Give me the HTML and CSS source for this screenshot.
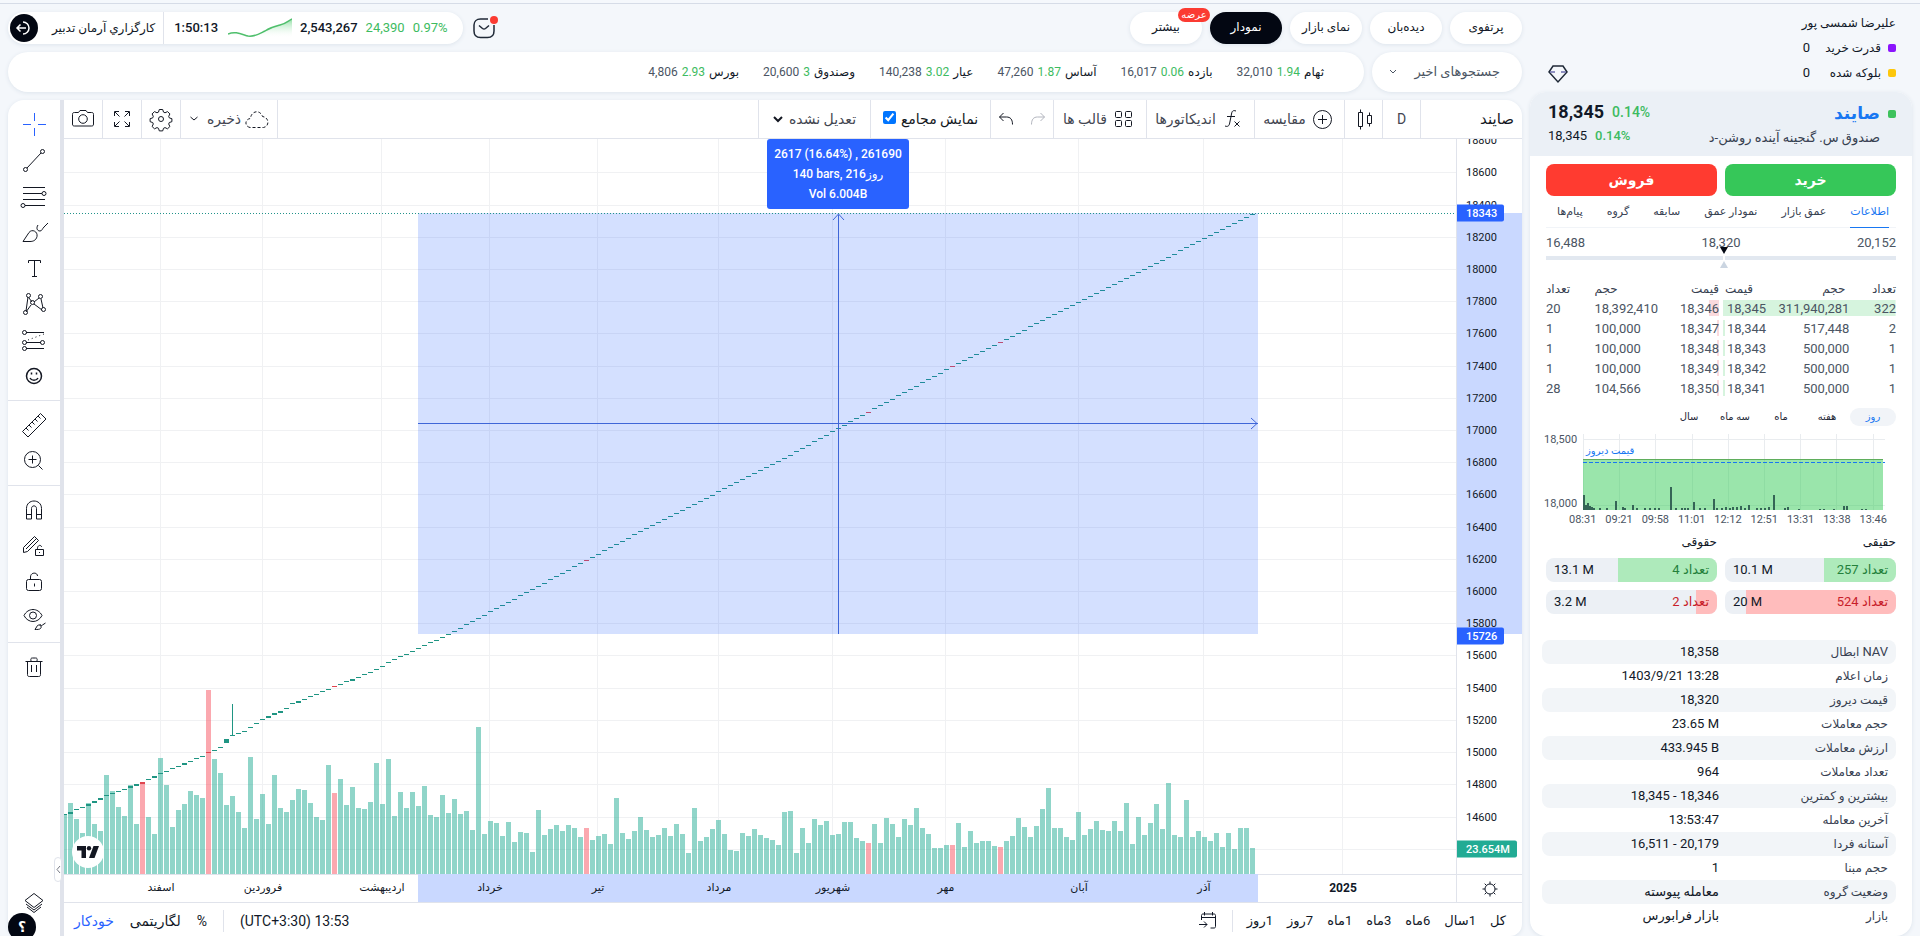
FILE: index.html
```html
<!DOCTYPE html>
<html lang="fa" dir="rtl">
<head>
<meta charset="utf-8">
<title>صایند - نمودار</title>
<link rel="stylesheet" href="styles.css">
</head>
<body>
<div class="page">
  <aside class="side">
    <section class="user">
      <div class="user-info">
        <strong class="user-name">علیرضا شمسی پور</strong>
        <div class="user-row"><i class="sq purple"></i><span class="user-label">قدرت خرید</span><span class="num">0</span></div>
        <div class="user-row"><i class="sq yellow"></i><span class="user-label">بلوکه شده</span><span class="num">0</span></div>
      </div>
      <button class="icon-btn gem" aria-label="باشگاه"><svg width="20" height="20" viewBox="0 0 20 20"><path d="M5 2h10l4 6-9 10L1 8z"/><path class="faint" d="M2 8h5M13 8h5"/></svg></button>
    </section>

    <section class="symbol-card">
      <header class="symbol-head">
        <div class="symbol-id">
          <i class="sq green"></i>
          <div>
            <h1 class="symbol-name">صایند</h1>
            <p class="symbol-desc">صندوق س. گنجینه آینده روشن-د</p>
          </div>
        </div>
        <div class="quote" dir="ltr">
          <div class="quote-row main-price"><b>18,345</b><span class="up">0.14%</span></div>
          <div class="quote-row"><span>18,345</span><span class="up">0.14%</span></div>
        </div>
      </header>

      <div class="symbol-body">
        <div class="trade">
          <button class="buy">خرید</button>
          <button class="sell">فروش</button>
        </div>
        <nav class="tabs">
          <a href="#info" class="on">اطلاعات</a><a href="#depth">عمق بازار</a><a href="#depthchart">نمودار عمق</a><a href="#history">سابقه</a><a href="#group">گروه</a><a href="#messages">پیام‌ها</a>
        </nav>

        <div class="range">
          <div class="range-labels num"><span>20,152</span><span>18,320</span><span>16,488</span></div>
          <div class="range-bar"><i class="mark-top"></i><i class="mark-gap"></i><i class="mark-bottom"></i></div>
        </div>

        <div class="depth">
          <table class="book bid">
            <thead><tr><th>تعداد</th><th>حجم</th><th>قیمت</th></tr></thead>
            <tbody>
              <tr class="full"><td>322</td><td>311,940,281</td><td>18,345</td></tr>
              <tr><td>2</td><td>517,448</td><td>18,344</td></tr>
              <tr><td>1</td><td>500,000</td><td>18,343</td></tr>
              <tr><td>1</td><td>500,000</td><td>18,342</td></tr>
              <tr><td>1</td><td>500,000</td><td>18,341</td></tr>
            </tbody>
          </table>
          <table class="book ask">
            <thead><tr><th>قیمت</th><th>حجم</th><th>تعداد</th></tr></thead>
            <tbody>
              <tr class="part"><td>18,346</td><td>18,392,410</td><td>20</td></tr>
              <tr><td>18,347</td><td>100,000</td><td>1</td></tr>
              <tr><td>18,348</td><td>100,000</td><td>1</td></tr>
              <tr><td>18,349</td><td>100,000</td><td>1</td></tr>
              <tr><td>18,350</td><td>104,566</td><td>28</td></tr>
            </tbody>
          </table>
        </div>

        <div class="periods">
          <button class="on">روز</button><button>هفته</button><button>ماه</button><button>سه ماه</button><button>سال</button>
        </div>

        <div class="mini" dir="ltr">
          <div class="mini-y"><span>18,500</span><span>18,000</span></div>
          <div class="mini-plot">
            <svg id="mini" width="100%" height="76" viewBox="0 0 302 76" preserveAspectRatio="none"></svg>
            <span class="mini-label" dir="rtl">قیمت دیروز</span>
          </div>
          <div class="mini-x"><span>08:31</span><span>09:21</span><span>09:58</span><span>11:01</span><span>12:12</span><span>12:51</span><span>13:31</span><span>13:38</span><span>13:46</span></div>
        </div>

        <div class="share">
          <div class="share-col">
            <h2>حقیقی</h2>
            <div class="meter pos"><i style="width:42%"></i><span>تعداد 257</span><b dir="ltr">10.1 M</b></div>
            <div class="meter neg"><i style="width:88%"></i><span>تعداد 524</span><b dir="ltr">20 M</b></div>
          </div>
          <div class="share-col">
            <h2>حقوقی</h2>
            <div class="meter pos"><i style="width:58%"></i><span>تعداد 4</span><b dir="ltr">13.1 M</b></div>
            <div class="meter neg"><i style="width:12%"></i><span>تعداد 2</span><b dir="ltr">3.2 M</b></div>
          </div>
        </div>

        <dl class="facts">
          <div><dt><span class="num">NAV</span> ابطال</dt><dd dir="ltr">18,358</dd></div>
          <div><dt>زمان اعلام</dt><dd dir="ltr">1403/9/21 13:28</dd></div>
          <div><dt>قیمت دیروز</dt><dd dir="ltr">18,320</dd></div>
          <div><dt>حجم معاملات</dt><dd dir="ltr">23.65 M</dd></div>
          <div><dt>ارزش معاملات</dt><dd dir="ltr">433.945 B</dd></div>
          <div><dt>تعداد معاملات</dt><dd dir="ltr">964</dd></div>
          <div><dt>بیشترین و کمترین</dt><dd dir="ltr">18,345 - 18,346</dd></div>
          <div><dt>آخرین معامله</dt><dd dir="ltr">13:53:47</dd></div>
          <div><dt>آستانه فردا</dt><dd dir="ltr">16,511 - 20,179</dd></div>
          <div><dt>حجم مبنا</dt><dd dir="ltr">1</dd></div>
          <div><dt>وضعیت گروه</dt><dd>معامله پیوسته</dd></div>
          <div><dt>بازار</dt><dd>بازار فرابورس</dd></div>
        </dl>
      </div>
    </section>
  </aside>

  <main class="main">
    <header class="top">
      <nav class="nav">
        <a href="#portfolio">پرتفوی</a><a href="#watch">دیده‌بان</a><a href="#market">نمای بازار</a><a href="#chart" class="on">نمودار</a><a href="#more">بیشتر<span class="badge">عرضه</span></a>
      </nav>
      <div class="status" dir="ltr">
        <div class="status-pill">
          <button class="exit" aria-label="خروج"><svg width="28" height="28" viewBox="0 0 28 28"><path d="M13 8a6 6 0 1 1 0 12M16 14H7M10.500 10.500L7 14l3.500 3.500"/></svg></button>
          <span class="broker" dir="rtl">کارگزاري آرمان تدبیر</span>
          <i class="vline"></i>
          <b class="clock">1:50:13</b>
          <svg class="spark" width="64" height="20" viewBox="0 0 64 20"><defs><linearGradient id="sg" x1="0" y1="0" x2="0" y2="1"><stop offset="0" stop-color="#8fdea3"/><stop offset="1" stop-color="#fff" stop-opacity="0"/></linearGradient></defs><path fill="url(#sg)" stroke="none" d="M0 16c7-3 13 0 20 2 7 1 11-2 17-5 6-4 11-5 15-6 6-1 8-4 12-6v19H0z"/><path fill="none" stroke="#4fbf6c" stroke-width="1.500" d="M0 16c7-3 13 0 20 2 7 1 11-2 17-5 6-4 11-5 15-6 6-1 8-4 12-6"/></svg>
          <b>2,543,267</b><span class="up">24,390</span><span class="up">0.97%</span>
        </div>
        <button class="icon-btn mail" aria-label="پیام‌ها"><svg width="22" height="22" viewBox="0 0 22 22"><path d="M15 2H7.500C3.500 2 1 4.500 1 8v6c0 4 2.500 6.500 6.500 6.500h7c4 0 6.500-2.500 6.500-6.500V8M6 8.500l3.500 3c1 .8 2 .8 3 0l3.500-3"/></svg><i class="dot"></i></button>
      </div>
    </header>

    <div class="quotes">
      <button class="recent">جستجوهای اخیر<svg width="8" height="6" viewBox="0 0 8 6"><path d="M1 1l3 3 3-3"/></svg></button>
      <ul class="ticker">
        <li><b>ثهام</b><span class="up">1.94</span><span>32,010</span></li>
        <li><b>بازده</b><span class="up">0.06</span><span>16,017</span></li>
        <li><b>آساس</b><span class="up">1.87</span><span>47,260</span></li>
        <li><b>عیار</b><span class="up">3.02</span><span>140,238</span></li>
        <li><b>وصندوق</b><span class="up">3</span><span>20,600</span></li>
        <li><b>بورس</b><span class="up">2.93</span><span>4,806</span></li>
      </ul>
    </div>

    <section class="chart">
      <div class="chart-main">
        <div class="bar">
          <button class="bar-symbol">صایند</button>
          <button class="w-d">D</button>
          <button class="w-c" aria-label="نوع نمودار"><svg width="28" height="28" viewBox="0 0 28 28"><path d="M8.500 7.500h4v14h-4zM10.500 4.500v3M10.500 21.500v3M17.500 10.500h4v8h-4zM19.500 7.500v3M19.500 18.500v3"/></svg></button>
          <button class="w-cmp"><svg width="28" height="28" viewBox="0 0 28 28"><circle cx="14.500" cy="14.500" r="9"/><path d="M10 14.500h9M14.500 10v9"/></svg>مقایسه</button>
          <button class="w-ind"><svg width="28" height="28" viewBox="0 0 28 28"><path d="M18 6c-3-1-4 0-4.500 3l-1.800 9c-.5 3-2 4-4.700 3M9 11.500h8M16.500 16.500l5 5M21.500 16.500l-5 5"/></svg>اندیکاتورها</button>
          <button class="w-tpl"><svg width="28" height="28" viewBox="0 0 28 28"><rect x="6.500" y="6.500" width="6" height="6" rx="1"/><rect x="16.500" y="6.500" width="6" height="6" rx="1"/><rect x="6.500" y="15.500" width="6" height="6" rx="1"/><rect x="16.500" y="15.500" width="6" height="6" rx="1"/></svg>قالب ها</button>
          <div class="group w-hist">
            <button class="plain off" aria-label="از نو"><svg width="28" height="28" viewBox="0 0 28 28"><path d="M7.500 19.500c0-5 2-7.500 6-7.500h7M16.500 8l4 4-4 4"/></svg></button>
            <button class="plain" aria-label="واگرد"><svg width="28" height="28" viewBox="0 0 28 28"><path d="M20.500 19.500c0-5-2-7.500-6-7.500h-7M11.500 8l-4 4 4 4"/></svg></button>
          </div>
          <label class="group w-chk">نمایش مجامع<input type="checkbox" checked></label>
          <button class="w-adj">تعدیل نشده<svg width="10" height="8" viewBox="0 0 10 8"><path class="thick" d="M1 2l4 4 4-4"/></svg></button>
          <div class="bar-end">
            <div class="group w-save">
              <button class="plain save"><svg width="24" height="20" viewBox="0 0 24 20"><path stroke-dasharray="3 2" d="M5 18.500C-1 17 0 10 5.500 9.500 6 2 15 0 17.500 7.500c7 1 7 10 1 11z"/></svg>ذخیره</button>
              <button class="plain" aria-label="بیشتر"><svg width="10" height="8" viewBox="0 0 10 8"><path d="M1.500 2l3.500 3 3.500-3"/></svg></button>
            </div>
            <button class="w-i" aria-label="تنظیمات"><svg width="28" height="28" viewBox="0 0 28 28"><circle cx="14" cy="14" r="2.500"/><path d="M12.300 4.500h3.400l.8 2.600 1.500.7 2.500-1.200 2.400 2.300-1.200 2.500.6 1.500 2.600.8v3l-2.600.8-.6 1.500 1.200 2.500-2.400 2.300-2.500-1.200-1.500.7-.8 2.600h-3.400l-.8-2.600-1.500-.7-2.500 1.200-2.400-2.300 1.200-2.500-.6-1.500-2.600-.8v-3l2.600-.8.6-1.500-1.200-2.500 2.400-2.300L10 7.800l1.500-.7z"/></svg></button>
            <button class="w-i" aria-label="تمام صفحه"><svg width="28" height="28" viewBox="0 0 28 28"><path d="M6.500 11V6.500H11M7 7l4.500 4.500M17 6.500h4.500V11M21 7l-4.500 4.500M6.500 17v4.500H11M7 21l4.500-4.500M17 21.500h4.500V17M21 21l-4.500-4.500"/></svg></button>
            <button class="w-i" aria-label="عکس"><svg width="28" height="28" viewBox="0 0 28 28"><path d="M5.500 7.500h4l1.500-2h6l1.500 2h4c1.500 0 2 .5 2 2v9.500c0 1.500-.5 2-2 2h-17c-1.500 0-2-.5-2-2V9.500c0-1.500.5-2 2-2z"/><circle cx="14" cy="14" r="4.300"/></svg></button>
          </div>
        </div>

        <div class="canvas" dir="ltr">
          <div class="plot">
            <svg id="plot" viewBox="0 0 1392 735" preserveAspectRatio="none" width="100%" height="100%"></svg>
            <div class="measure"><p>2617 (16.64%) , 261690</p><p>140 bars, 216<bdi>روز</bdi></p><p>Vol 6.004B</p></div>
            <div class="logo"><svg width="22" height="12" viewBox="0 0 22 12"><path d="M0 0h9v12H4.500V4.500H0z"/><circle cx="12" cy="2.200" r="2.200"/><path d="M16.500 0H22l-4.500 12H12z"/></svg></div>
          </div>
          <div class="prices" id="prices"></div>
          <div class="times" id="times"></div>
          <button class="axis-cog" aria-label="تنظیمات محور"><svg width="18" height="18" viewBox="0 0 18 18"><circle cx="9" cy="9" r="5"/><path d="M9 1.500v2.500M9 14v2.500M1.500 9H4M14 9h2.500M3.700 3.700l1.800 1.800M12.500 12.500l1.800 1.800M3.700 14.300l1.800-1.800M12.500 5.500l1.800-1.800"/></svg></button>
        </div>

        <footer class="foot">
          <div class="spans"><button>کل</button><button>1سال</button><button>6ماه</button><button>3ماه</button><button>1ماه</button><button>7روز</button><button>1روز</button><i class="vline"></i><button aria-label="برو به تاریخ"><svg width="20" height="20" viewBox="0 0 20 20"><path d="M3.500 9V4.500c0-1 .5-1.500 1.500-1.500h11c1 0 1.500.5 1.500 1.500v11c0 1-.5 1.500-1.500 1.500h-3.500M3.500 6.500h14M6.500 1v3.500M14.500 1v3.500M1 13.500h8M6 10.500l3 3-3 3"/></svg></button></div>
          <div class="scales"><button dir="ltr">(UTC+3:30) 13:53</button><i class="vline"></i><button>%</button><button>لگاریتمی</button><button class="blue">خودکار</button></div>
        </footer>
      </div>

      <div class="tools">
        <div class="tool-set">
          <button class="blue" aria-label="نشانگر"><svg viewBox="0 0 28 28"><path d="M3 14.500h8M18 14.500h8M14.500 3v8M14.500 18v8"/></svg></button>
          <button aria-label="خط روند"><svg viewBox="0 0 28 28"><path d="M7 22L21 7"/><circle cx="5.500" cy="23.500" r="2"/><circle cx="22.500" cy="5.500" r="2"/></svg></button>
          <button aria-label="فیبوناچی"><svg viewBox="0 0 28 28"><path d="M3 5.500h22M3 11.500h19M3 17.500h22M5 23.500h20"/><circle cx="24" cy="11.500" r="2"/><circle cx="3" cy="23.500" r="2"/></svg></button>
          <button aria-label="قلم مو"><svg viewBox="0 0 28 28"><path d="M3 23.500l6-9c3-4 9-1 8 4-1 4-4 5-7 5zM18 7c-2 3-1 6 2 6 2 0 2-2 4-4l4-4"/></svg></button>
          <button aria-label="متن"><svg viewBox="0 0 28 28"><path d="M8.500 9V6.500h12V9M14.500 6.500v16M12 22.500h5"/></svg></button>
          <button aria-label="الگوها"><svg viewBox="0 0 28 28"><path d="M8 7L6 21M9 8l3 4M14 12l5-4M21 9l2 9M14 14l8 6M11 15l-5 7"/><circle cx="8.500" cy="5.500" r="2"/><circle cx="20.500" cy="6.500" r="2"/><circle cx="12.500" cy="12.500" r="2"/><circle cx="23.500" cy="19.500" r="2"/><circle cx="5.500" cy="22.500" r="2"/></svg></button>
          <button aria-label="پیش‌بینی"><svg viewBox="0 0 28 28"><path d="M6 6.500h18M6 16.500h15M6 22.500h18"/><path stroke-dasharray="1 3" d="M8 14l16-6"/><circle cx="4.500" cy="6.500" r="2"/><circle cx="4.500" cy="16.500" r="2"/><circle cx="22.500" cy="16.500" r="2"/><circle cx="4.500" cy="22.500" r="2"/></svg></button>
          <button aria-label="شکلک"><svg viewBox="0 0 28 28" stroke-width="1.500"><circle cx="14" cy="14" r="7.500"/><path d="M10 16c1.500 3 6.500 3 8 0M11.500 10.500v2M16.500 10.500v2"/></svg></button>
        </div>
        <div class="tool-set">
          <button aria-label="خط‌کش"><svg viewBox="0 0 28 28"><path d="M2.500 20.500l18-18 5.500 5.500-18 18zM6 17l2.500 2.500M9 14l2.500 2.500M12 11l2.500 2.500M15 8l2.500 2.500M18 5l2.500 2.500"/></svg></button>
          <button aria-label="بزرگنمایی"><svg viewBox="0 0 28 28"><circle cx="12.500" cy="12.500" r="8"/><path d="M18.500 18.500l4 4M8.500 12.500h8M12.500 8.500v8"/></svg></button>
        </div>
        <div class="tool-set">
          <button aria-label="آهنربا"><svg viewBox="0 0 28 28"><path d="M6.500 23V12.500c0-10 15-10 15 0V23h-5V12.500c0-3.500-5-3.500-5 0V23zM6.500 18.500h5M16.500 18.500h5"/></svg></button>
          <button aria-label="قفل رسم"><svg viewBox="0 0 28 28"><path d="M3.500 15.500L14.500 4.500l4 4-11 11-4 1zM6 17l10-10M15.500 17.500h8v6h-8zM17.500 17.500c-.5-5 4-5 4-2.500M19.500 20v1"/></svg></button>
          <button aria-label="قفل"><svg viewBox="0 0 28 28"><rect x="6.500" y="11.500" width="15" height="11" rx="2"/><path d="M10.500 11.500V9c0-5 7-5 7-1M14.500 15.500v3"/></svg></button>
          <button aria-label="نمایش"><svg viewBox="0 0 28 28"><path d="M4 11.500c4-8 14-8 18 0-4 8-14 8-18 0z"/><circle cx="13" cy="11.500" r="3.500"/><path d="M15 25.500l2.500-4c2-1.500 5 1 3 3-1 1-3 1-5.500 1zM20 20c0 2 2 2 2.500 1l3-2"/></svg></button>
        </div>
        <div class="tool-set last">
          <button aria-label="حذف"><svg viewBox="0 0 28 28"><path d="M5.500 8.500h17M7.500 8.500v13c0 1.500.5 2 2 2h9c1.500 0 2-.5 2-2v-13M11 8c-.5-2.500 0-3 1.500-3h3c1.500 0 2 .5 1.500 3M11.500 12v7M16.500 12v7"/></svg></button>
        </div>
        <button class="layers" aria-label="لایه‌ها"><svg viewBox="0 0 28 28"><path d="M14 4.500l9 7-9 7-9-7zM6 15l8 6 8-6M7 18l7 5.500 7-5.500"/></svg></button>
        <button class="help">؟</button>
        <button class="handle" aria-label="بستن"><svg width="5" height="9" viewBox="0 0 5 9"><path d="M4 1L1 4.500 4 8"/></svg></button>
      </div>
    </section>
  </main>
</div>
<script src="chart.js"></script>
</body>
</html>
```
FILE: styles.css
```css
* { box-sizing: border-box; }
body {
  margin: 0;
  border-top: 3px solid #f5f8fc;
  background: #f4f7fb;
  color: #111827;
  font: 12px/16px Roboto, "DejaVu Sans", sans-serif;
}
h1, h2, p, ul, dl, dd { margin: 0; padding: 0; }
ul { list-style: none; }
a { color: inherit; text-decoration: none; }
button { margin: 0; padding: 0; border: 0; background: none; color: inherit; font: inherit; cursor: pointer; }
svg { display: block; fill: none; stroke: currentColor; flex: none; }
.thick { stroke-width: 2; }
.num { font-size: 13px; }
.up { color: #3dbb61; }
.blue { color: #2962ff; }
.vline { width: 1px; align-self: stretch; background: #e0e3eb; }

.page {
  display: grid;
  grid-template-columns: 382px minmax(0, 1fr);
  gap: 8px;
  min-height: calc(100vh - 3px);
  padding: 8px 8px 0;
  border-top: 1px solid #d6dce7;
}
.main { display: flex; flex-direction: column; gap: 8px; }
.side { display: flex; flex-direction: column; }

/* Header */
.top, .nav, .status, .status-pill { display: flex; align-items: center; }
.top { justify-content: space-between; }
.nav { gap: 8px; }
.nav a {
  position: relative;
  width: 72px;
  height: 32px;
  border-radius: 16px;
  background: #fff;
  box-shadow: 0 1px 4px #dde4ec;
  line-height: 30px;
  text-align: center;
}
.nav a.on { background: #030712; color: #fff; }
.badge {
  position: absolute;
  top: -4px;
  right: -8px;
  width: 32px;
  border-radius: 7px;
  background: #fb3b32;
  color: #fff;
  font-size: 10px;
  line-height: 14px;
}
.status { gap: 10px; }
.status-pill {
  height: 32px;
  gap: 8px;
  padding: 0 15px 0 2px;
  border-radius: 16px;
  background: #fff;
  box-shadow: 0 1px 4px #dde4ec;
  font-size: 13px;
}
.status-pill b { font-weight: 500; }
.exit { border-radius: 14px; background: #030712; color: #fff; }
.exit svg { stroke-width: 1.5; }
.broker { margin-left: 6px; font-size: 12px; }
.clock { margin: 0 2px; }
.icon-btn { position: relative; color: #1f2937; }
.icon-btn svg { stroke-width: 1.5; }
.dot { position: absolute; top: -1px; right: -3px; width: 8px; height: 8px; border-radius: 4px; background: #fb3b32; }

.quotes { display: flex; gap: 8px; }
.recent, .ticker { height: 40px; border-radius: 20px; background: #fff; box-shadow: 0 1px 4px #dde4ec; }
.recent { display: flex; align-items: center; justify-content: space-between; width: 150px; padding: 0 22px 0 17px; color: #4b5563; font-size: 13px; }
.ticker { display: flex; flex: 1; align-items: center; gap: 24px; padding: 0 40px; }
.ticker li { display: flex; gap: 4px; color: #4b5563; }
.ticker b { color: #111827; font-weight: 400; }

/* Chart card */
.chart { display: flex; flex: 1; border-radius: 16px 16px 12px 12px; background: #fff; box-shadow: 0 1px 4px #dde4ec; }
.chart-main { display: flex; flex: 1; flex-direction: column; min-width: 0; border-left: 4px solid #e0e3eb; }
.bar { display: flex; height: 39px; border-bottom: 1px solid #e0e3eb; color: #434651; font-size: 14px; }
.bar > button, .bar .group, .bar-end > button { display: flex; align-items: center; justify-content: center; gap: 2px; border-left: 1px solid #e0e3eb; white-space: nowrap; }
.bar svg { color: #131722; }
.bar .bar-symbol { width: 102px; padding: 0 8px 0 0; justify-content: flex-start; color: #131722; font-size: 15px; font-weight: 500; }
.w-d { width: 38px; }
.w-c { width: 38px; }
.w-cmp { width: 90px; }
.w-ind { width: 108px; }
.w-tpl { width: 93px; }
.bar .w-hist { width: 63px; gap: 4px; }
.w-hist .off svg { color: #b2b5be; }
.bar .w-chk { width: 120px; gap: 5px; color: #131722; }
.w-chk input { width: 13px; height: 13px; margin: 0 0 4px; accent-color: #0075ff; }
.bar .w-adj { width: 112px; gap: 6px; }
.bar-end { display: flex; margin-right: auto; }
.bar .w-save { width: 98px; gap: 8px; border-right: 1px solid #e0e3eb; }
.save { display: flex; align-items: center; gap: 4px; }
.w-i { width: 39px; }
.bar-end .w-i:last-child { width: 38px; border-left: 0; }

.canvas {
  display: grid;
  flex: 1;
  grid-template: minmax(0, 1fr) 28px / minmax(0, 1fr) 66px;
  min-height: 400px;
}
.plot { position: relative; overflow: hidden; }
.plot > svg { position: absolute; inset: 0; stroke: none; }
.prices { position: relative; overflow: hidden; border-left: 1px solid #e0e3eb; font-size: 11px; line-height: 17px; }
.prices span { position: absolute; left: 0; padding: 0 7px 0 9px; transform: translateY(-50%); }
.prices .tag { border-radius: 0 2px 2px 0; background: #2962ff; color: #fff; font-weight: 500; }
.prices .tag.vol { background: #22ab94; }
.band { position: absolute; background: #c9d8ff; }
.prices .band { left: 0; right: 0; }
.times { position: relative; border-top: 1px solid #e0e3eb; font-size: 11px; line-height: 26px; }
.times span { position: absolute; transform: translateX(-50%); white-space: nowrap; }
.times .year { font-size: 12px; font-weight: 700; }
.times .band { top: -1px; bottom: 0; }
.axis-cog { display: grid; place-items: center; border-top: 1px solid #e0e3eb; border-left: 1px solid #e0e3eb; }
.measure {
  position: absolute;
  top: 0;
  left: 50%;
  margin-left: 7px;
  width: 142px;
  padding: 5px 0;
  border-radius: 3px;
  background: #2962ff;
  color: #fff;
  font-weight: 500;
  line-height: 20px;
  text-align: center;
}
.logo { position: absolute; left: 8px; bottom: 6px; display: grid; place-items: center; width: 32px; height: 32px; border-radius: 16px; background: #fff; }
.logo svg { fill: #131722; stroke: none; }

.foot { display: flex; justify-content: space-between; height: 34px; padding: 2px 16px 0 10px; border-top: 1px solid #e0e3eb; }
.spans, .scales { display: flex; align-items: center; gap: 16px; }
.spans { gap: 14px; font-size: 13px; }
.scales { font-size: 14px; }
.foot .vline { height: 22px; align-self: center; }

/* Drawing tools */
.tools { position: relative; display: flex; flex-direction: column; width: 52px; padding-top: 6px; color: #131722; }
.tool-set { display: flex; flex-direction: column; padding-bottom: 6px; margin-bottom: 6px; border-bottom: 1px solid #e0e3eb; }
.tool-set.last { border: 0; }
.tools button { display: grid; place-items: center; height: 36px; }
.tools svg { width: 28px; height: 28px; }
.tools .layers { margin-top: auto; margin-bottom: 15px; }
.tools .help { position: absolute; left: 0; bottom: -5px; width: 28px; height: 28px; border-radius: 14px; background: #030712; color: #fff; font-size: 14px; font-weight: 700; }
.tools .handle { position: absolute; right: -2px; bottom: 54px; width: 8px; height: 25px; border: 1px solid #e0e3eb; border-radius: 4px; background: #fff; color: #787b86; }
.tools .handle svg { width: 5px; height: 9px; }

/* User */
.user { display: flex; align-items: flex-end; justify-content: space-between; height: 80px; padding: 0 16px 8px; }
.user-info { align-self: flex-start; padding-top: 3px; }
.user-name { display: block; margin-bottom: 4px; font-size: 12px; font-weight: 500; }
.user-row { display: flex; align-items: center; gap: 7px; height: 25px; }
.user-label { width: 64px; }
.sq { width: 8px; height: 8px; border-radius: 2px; flex: none; }
.purple { background: #8b14fd; }
.yellow { background: #fdc70c; }
.green { background: #3dc25c; }
.gem { margin-left: 2px; }
.gem .faint { stroke: #6d6fae; }

/* Symbol card */
.symbol-card { flex: 1; border-radius: 16px; background: #fff; box-shadow: 0 1px 4px #dde4ec; overflow: hidden; }
.symbol-head { display: flex; justify-content: space-between; height: 64px; padding: 8px 16px; background: #ebf0f6; }
.symbol-id { display: flex; gap: 8px; }
.symbol-id .sq { margin-top: 10px; }
.symbol-name { color: #1877f2; font-size: 17px; font-weight: 700; line-height: 26px; }
.symbol-desc { color: #374151; font-size: 13px; line-height: 24px; }
.quote { padding-left: 2px; }
.quote-row { display: flex; align-items: center; gap: 8px; height: 24px; font-size: 13px; }
.quote-row .up { font-weight: 500; }
.main-price { font-size: 14px; }
.quote-row b { font-size: 18px; }
.symbol-body { padding: 8px 16px 7px; }

.trade { display: grid; grid-template-columns: 1fr 1fr; gap: 8px; }
.trade button { height: 32px; border-radius: 8px; color: #fff; font-size: 14px; font-weight: 700; }
.buy { background: #36c759; }
.sell { background: #ff3b30; }
.tabs { display: flex; justify-content: space-between; padding: 0 7px 0 11px; border-bottom: 1px solid #f1f4f8; color: #374151; font-size: 11px; line-height: 31px; }
.tabs .on { margin-bottom: -1px; border-bottom: 1px solid #1877f2; color: #1877f2; }

.range { padding-top: 7px; color: #4b5563; }
.range-labels { display: grid; grid-template-columns: 1fr 1fr 1fr; line-height: 16px; }
.range-labels :nth-child(2) { text-align: center; }
.range-labels :nth-child(3) { text-align: left; }
.range-bar { position: relative; height: 4px; margin: 5px 0 18px; background: #e2e8f0; }
.range-bar i { position: absolute; left: 50%; width: 8px; margin-left: -1px; }
.mark-top { bottom: 6px; height: 7px; background: #030712; clip-path: polygon(0 0, 100% 0, 50% 100%); }
.mark-bottom { top: 5px; height: 7px; background: #cbd5e1; clip-path: polygon(50% 0, 100% 100%, 0 100%); }
.range-bar .mark-gap { top: 0; width: 2px; height: 4px; margin-left: 2px; background: #fff; }

.depth { display: grid; grid-template-columns: 1fr 1fr; gap: 4px; color: #4b5563; }
.book { width: 100%; border-collapse: collapse; table-layout: fixed; font-size: 13px; }
.book th { height: 21px; padding: 0; color: #374151; font-size: 12px; font-weight: 400; text-align: right; }
.book td { height: 20px; padding: 0; line-height: 16px; text-align: right; }
.bid th:first-child { width: 20%; }
.bid th:nth-child(2) { width: 48%; padding-right: 16px; }
.bid td:nth-child(2) { padding-right: 12px; }
.bid th:last-child { padding-left: 2px; text-align: left; }
.bid td:last-child { padding-left: 4px; text-align: left; background: linear-gradient(#d6f4de, #d6f4de) 0 1px / 2px 16px no-repeat; }
.bid .full { background: linear-gradient(#d6f4de, #d6f4de) 0 1px / 100% 16px no-repeat; }
.ask th:first-child { width: 28%; }
.ask th:nth-child(2) { width: 44%; }
.ask th:nth-child(n + 2), .ask td:nth-child(n + 2) { text-align: left; }
.ask td:first-child { background: linear-gradient(#fadadd, #fadadd) 100% 1px / 2px 16px no-repeat; }
.ask .part td:first-child { background-size: 10px 16px; }

.periods { display: flex; margin: 9px 0 8px; font-size: 10px; }
.periods button { min-width: 46px; height: 18px; padding: 0 8px; border-radius: 9px; color: #1f2937; }
.periods .on { background: #f1f4f8; color: #1877f2; }

.mini { display: grid; grid-template-columns: 36px 1fr; column-gap: 3px; margin: 0 11px 0 -2px; color: #4b5563; font-size: 11px; }
.mini-y { display: flex; flex-direction: column; justify-content: space-between; height: 76px; }
.mini-y span { padding-right: 4px; text-align: right; white-space: nowrap; line-height: 12px; }
.mini-plot { position: relative; }
.mini-plot svg { stroke: none; }
.mini-label { position: absolute; top: 9px; left: 3px; color: #1877f2; font-size: 10px; font-weight: 500; }
.mini-x { grid-column: 1 / -1; display: flex; justify-content: space-between; margin: 2px -2px 0 25px; }

.share { display: grid; grid-template-columns: 1fr 1fr; gap: 8px; margin-top: 6px; }
.share h2 { margin-bottom: 8px; font-size: 12px; font-weight: 500; line-height: 16px; }
.meter { position: relative; display: flex; align-items: center; justify-content: space-between; height: 24px; padding: 0 8px; margin-bottom: 8px; overflow: hidden; border-radius: 8px; background: #ecf0f5; font-size: 13px; }
.meter i { position: absolute; top: 0; right: 0; bottom: 0; }
.meter span, .meter b { position: relative; font-weight: 400; }
.pos i { background: #aeeabb; }
.pos span { color: #24803b; }
.neg i { background: #ffbcbc; }
.neg span { color: #c81e2b; }

.facts { margin: 18px 0 0 -4px; }
.facts div { display: grid; grid-template-columns: 1fr 1fr; align-items: center; height: 24px; padding: 0 8px; border-radius: 8px; }
.facts div:nth-child(odd) { background: #f2f5f8; }
.facts dt { color: #374151; }
.facts dd { font-size: 13px; text-align: right; }
```
FILE: chart.js
```js
const W = 1392, H = 735;
const TEAL = '#22ab94', RED = '#f7525f';
const rect = (x, y, w, h, fill, extra = '') =>
  `<rect x="${x}" y="${y}" width="${w}" height="${h}" fill="${fill}" shape-rendering="crispEdges" ${extra}/>`;
const priceY = p => 33.3 + (18600 - p) / 200 * 32.21;

/* Volume of each bar, in thirds of a pixel */
const volumes = [178,214,166,124,214,151,130,298,250,202,175,268,151,271,172,121,349,268,142,193,211,250,238,229,553,346,304,208,235,187,139,352,166,241,151,298,199,187,223,256,253,214,172,163,328,244,286,208,262,199,196,217,334,211,346,175,247,199,247,205,265,178,172,238,184,226,181,190,133,442,121,160,154,115,157,97,127,124,67,193,118,136,148,130,148,139,112,139,103,115,121,91,229,124,106,130,172,133,112,118,139,115,151,121,64,199,100,112,136,163,121,73,70,124,115,136,118,109,103,88,187,190,64,139,94,166,148,160,118,121,157,157,109,100,94,151,94,169,151,112,166,148,199,139,121,79,79,88,88,154,82,130,94,100,100,85,82,100,115,169,142,112,145,196,259,139,139,112,103,187,118,136,160,133,130,160,130,214,91,172,118,154,211,136,274,118,112,223,112,130,112,100,124,82,124,76,139,139,79];
const down = new Set([13, 24, 45, 87, 134, 148, 156]);
const thick = new Set([1, 4, 5, 6, 11, 12, 13, 15, 20, 34, 35, 36, 39, 48]);

/* Close price line as [bar, y] knots */
const knots = [[0,675],[1,673],[4,665],[7,656],[10,650],[11,647],[13,643],[16,634],[20,624],[23,617],[24,613],[26,608],[27,600],[28,596],[30,592],[33,580],[35,574],[37,569],[38,564],[39,562],[45,547],[48,540],[52,530],[54,523],[64,495],[87,421],[97,389],[120,319],[129,289],[148,227],[173,151],[198,75]];
const lineY = i => {
  const k = knots.findIndex(p => p[0] >= i);
  if (k < 1) return knots[0][1];
  const [a, b] = [knots[k - 1], knots[k]];
  return Math.round(a[1] + (b[1] - a[1]) * (i - a[0]) / (b[0] - a[0]));
};

const months = [[97,'اسفند'],[199,'فروردین'],[318,'اردیبهشت'],[426,'خرداد'],[534,'تیر'],[655,'مرداد'],[769,'شهریور'],[882,'مهر'],[1015,'آبان'],[1140,'آذر'],[1279,'2025']];

let s = '';
for (let p = 18600; p >= 14400; p -= 200) s += rect(0, Math.round(priceY(p)), W, 1, '#f0f1f3');
for (const [x] of months) s += rect(x - 1, 0, 1, H, '#f0f1f3');
volumes.forEach((v, i) => {
  s += rect(i * 6 - 2, H - Math.round(v / 3), 5, Math.round(v / 3), down.has(i) ? RED : TEAL, 'opacity=".5"');
});
volumes.forEach((v, i) => {
  const h = i === 27 ? 4 : thick.has(i) ? 2 : 1;
  s += rect(i * 6 - 2, lineY(i), 5, h, down.has(i) ? '#e0454f' : '#1f9583');
});
s += rect(168, 565, 1, 31, '#1f9583');
s += rect(354, 74, 840, 421, '#2962ff', 'opacity=".2"');
s += `<path d="M0 74.500H${W}" stroke="#22938a" stroke-dasharray="1 2" fill="none"/>`;
s += `<path d="M354 284.500H1194M1187 279l6 5.500-6 5.500M774.500 495V76M769 81l5.500-6 5.500 6" stroke="#3f66d8" fill="none"/>`;
document.getElementById('plot').innerHTML = s;

let p = `<i class="band" style="top:${74 / H * 100}%;height:${421 / H * 100}%"></i>`;
for (let v = 18800; v >= 14600; v -= 200) p += `<span style="top:${priceY(v) / H * 100}%">${v}</span>`;
p += `<span class="tag" style="top:${74.5 / H * 100}%">18343</span>`;
p += `<span class="tag" style="top:${496.5 / H * 100}%">15726</span>`;
p += `<span class="tag vol" style="top:${709.5 / H * 100}%">23.654M</span>`;
document.getElementById('prices').innerHTML = p;

let t = `<i class="band" style="left:${354 / W * 100}%;width:${840 / W * 100}%"></i>`;
for (const [x, name] of months) t += `<span${name === '2025' ? ' class="year"' : ''} style="left:${x / W * 100}%">${name}</span>`;
document.getElementById('times').innerHTML = t;

/* Intraday chart of the side panel */
const spikes = [[0,15],[2,5],[4,7],[6,4],[8,3],[10,2],[16,2],[23,2],[32,9],[39,3],[41,2],[49,5],[53,2],[61,2],[66,2],[71,2],[75,2],[87,23],[92,2],[98,2],[101,2],[104,2],[110,8],[116,2],[121,2],[130,11],[133,2],[138,2],[142,3],[146,2],[149,3],[153,3],[157,4],[161,2],[165,5],[173,2],[177,2],[181,2],[185,3],[190,15],[201,2],[204,3],[215,1],[236,1],[240,1],[250,1],[260,4],[263,4],[278,1],[282,1]];
let m = rect(0, 5, 302, 1, '#e9ecef') + rect(0, 71, 302, 1, '#e9ecef');
for (let i = 0; i < 9; i++) m += rect(Math.round(i * 36.2), 0, 1, 76, '#e9ecef');
m += rect(0, 25, 300, 51, '#36cb57', 'opacity=".5"') + rect(0, 25, 300, 1, '#5fae5c');
m += '<path d="M0 28.500H302" stroke="#1877f2" stroke-dasharray="4 2" fill="none"/>';
for (const [x, h] of spikes) m += rect(x, 76 - h, 2, h, '#356556');
document.getElementById('mini').innerHTML = m;
```
